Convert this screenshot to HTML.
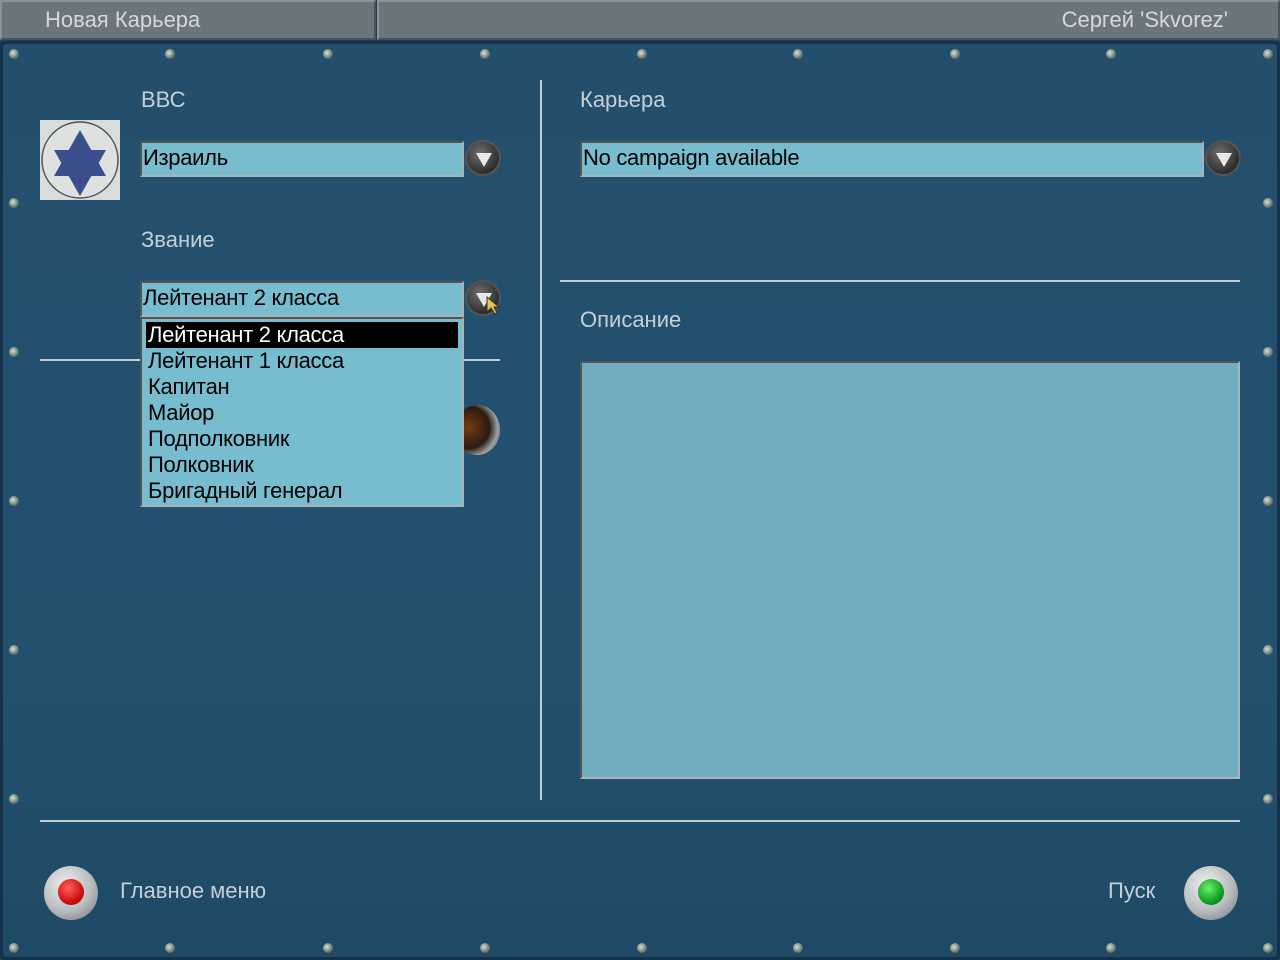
<!DOCTYPE html>
<html><head><meta charset="utf-8">
<style>
*{margin:0;padding:0;box-sizing:border-box}
body{width:1280px;height:960px;overflow:hidden;background:#1d3f58;font-family:"Liberation Sans",sans-serif;position:relative}
.hdr{position:absolute;top:0;height:40px;background:#6b757c;border:2px solid #4a5257;border-top-color:#8a949a;border-left-color:#8a949a;color:#d4d8da;font-size:22px;line-height:36px}
.panel{position:absolute;left:0;top:41px;width:1280px;height:919px;background:linear-gradient(180deg,#244f6c 0%,#23506e 40%,#22506d 70%,#1f4a66 100%);border:3px solid #13324a;border-radius:6px}
.lbl{position:absolute;color:#c6cfd5;font-size:22px}
.fld{position:absolute;background:#78bccf;border:2px solid #555;border-right-color:#a8b4b8;border-bottom-color:#a8b4b8;color:#000;font-size:22px;line-height:30px;padding-left:1px;letter-spacing:-0.3px}
.drop{position:absolute;width:36px;height:36px;border-radius:50%;background:radial-gradient(circle at 40% 35%,#6e6e6e,#2e2e2e 70%);border:2px solid #555}
.drop:after{content:"";position:absolute;left:9px;top:11px;border-left:8px solid transparent;border-right:8px solid transparent;border-top:14px solid #e8e8e8}
.line{position:absolute;background:#c5ccd0}
.screw{position:absolute;width:10px;height:10px;border-radius:50%;background:radial-gradient(circle at 40% 40%,#d8e0d8,#6a7a70 60%,#2b3a35);}
.list{position:absolute;left:140px;top:317px;width:324px;height:190px;background:#78bccf;border:2px solid #555;border-right-color:#a8b4b8;border-bottom-color:#a8b4b8;font-size:22px;letter-spacing:-0.3px}
.list div{height:26px;line-height:26px;padding-left:2px;margin:0 4px}
.btn{position:absolute;width:54px;height:54px;border-radius:50%;background:radial-gradient(circle at 40% 35%,#f0f0f0,#b8bcbe 55%,#6b7072)}
.btn i{position:absolute;left:14px;top:13px;width:26px;height:26px;border-radius:50%}
</style></head><body>
<div class="hdr" style="left:0;width:376px;padding-left:43px">Новая Карьера</div>
<div class="hdr" style="left:377px;width:903px;text-align:right;padding-right:50px">Сергей 'Skvorez'</div>
<div class="panel"></div>

<div class="lbl" style="left:141px;top:87px">ВВС</div>
<div style="position:absolute;left:40px;top:120px;width:80px;height:80px;background:#d9dcdc">
<svg width="80" height="80"><circle cx="40" cy="40" r="38" fill="#dfe1e1" stroke="#555" stroke-width="1.5"/><polygon points="40,10 66,56 14,56" fill="#3a4f8c"/><polygon points="40,76 14,30 66,30" fill="#3a4f8c"/></svg></div>
<div class="fld" style="left:140px;top:141px;width:324px;height:36px">Израиль</div>
<div class="drop" style="left:465px;top:140px"></div>

<div class="lbl" style="left:141px;top:227px">Звание</div>
<div class="fld" style="left:140px;top:281px;width:324px;height:36px">Лейтенант 2 класса</div>
<div class="drop" style="left:465px;top:280px"></div>
<svg style="position:absolute;left:486px;top:296px" width="14" height="20"><polygon points="1,1 1,16 5,12 9,18 11,17 8,11 13,11" fill="#e8c24a" stroke="#333" stroke-width="1"/></svg>

<div class="line" style="left:40px;top:359px;width:100px;height:2px"></div>
<div class="line" style="left:464px;top:359px;width:36px;height:2px"></div>
<div style="position:absolute;left:455px;top:405px;width:45px;height:50px;border-radius:50%;background:radial-gradient(circle at 30% 45%,#7a3a10,#2a1a10 50%,#9aa0a2 70%,#333)"></div>

<div class="list">
<div style="background:#000;color:#fff;margin-top:3px">Лейтенант 2 класса</div>
<div>Лейтенант 1 класса</div>
<div>Капитан</div>
<div>Майор</div>
<div>Подполковник</div>
<div>Полковник</div>
<div>Бригадный генерал</div>
</div>

<div class="line" style="left:540px;top:80px;width:2px;height:720px"></div>
<div class="lbl" style="left:580px;top:87px">Карьера</div>
<div class="fld" style="left:580px;top:141px;width:624px;height:36px">No campaign available</div>
<div class="drop" style="left:1205px;top:140px"></div>
<div class="line" style="left:560px;top:280px;width:680px;height:2px"></div>
<div class="lbl" style="left:580px;top:307px">Описание</div>
<div style="position:absolute;left:580px;top:361px;width:660px;height:418px;background:#72adbf;border:2px solid #555;border-right-color:#a8b4b8;border-bottom-color:#a8b4b8"></div>

<div class="line" style="left:40px;top:820px;width:1200px;height:2px"></div>
<div class="btn" style="left:44px;top:866px"><i style="background:radial-gradient(circle at 40% 35%,#ff6060,#d01010 60%,#800)"></i></div>
<div class="lbl" style="left:120px;top:878px">Главное меню</div>
<div class="lbl" style="left:1108px;top:878px">Пуск</div>
<div class="btn" style="left:1184px;top:866px"><i style="background:radial-gradient(circle at 40% 35%,#70f070,#10a020 60%,#064)"></i></div>

<div id="s"></div>
<script>
var xs=[14,170,328,485,642,798,955,1111,1268],h='';
xs.forEach(function(x){h+='<div class="screw" style="left:'+(x-5)+'px;top:49px"></div><div class="screw" style="left:'+(x-5)+'px;top:943px"></div>';});
[203,352,501,650,799].forEach(function(y){h+='<div class="screw" style="left:9px;top:'+(y-5)+'px"></div><div class="screw" style="left:1263px;top:'+(y-5)+'px"></div>';});
document.getElementById('s').innerHTML=h;
</script>
</body></html>
